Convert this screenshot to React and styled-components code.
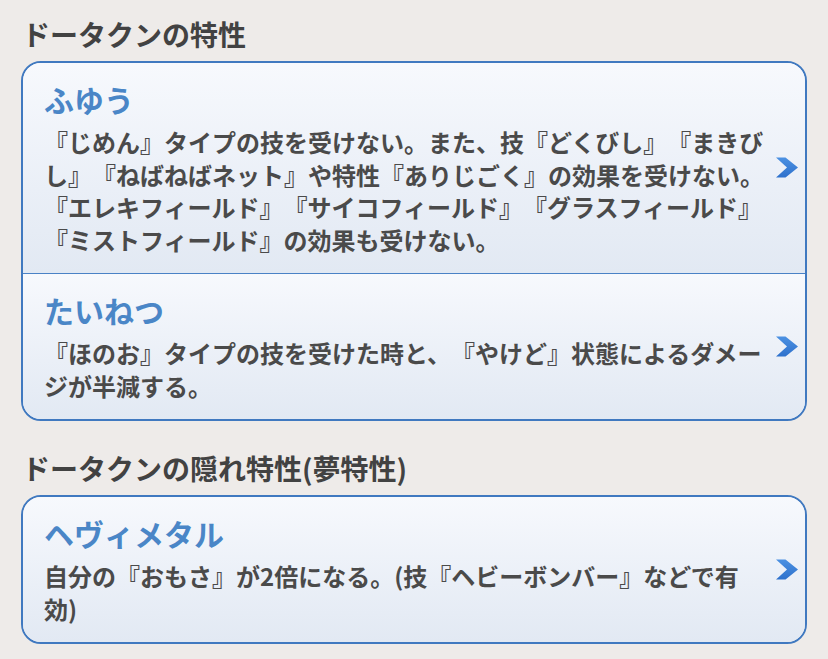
import React from 'react';
import styled, { createGlobalStyle } from 'styled-components';

const GlobalStyle = createGlobalStyle`
  html, body {
    margin: 0;
    padding: 0;
    background: #eeebe9;
  }
  body {
    font-family: "Noto Sans CJK JP", "Noto Sans", sans-serif;
    text-spacing-trim: space-all;
  }
`;

const Page = styled.div`
  padding: 16px 21px 20px;
  width: 828px;
  box-sizing: border-box;
`;

const SectionTitle = styled.h2`
  margin: ${props => (props.first ? '0' : '29px')} 0 9px 1px;
  font-size: 28px;
  line-height: 36px;
  font-weight: 700;
  color: #424242;
`;

const Card = styled.div`
  border: 2px solid #4079c0;
  border-radius: 20px;
  overflow: hidden;
  background: #eef2f9;
`;

const Row = styled.div`
  display: flex;
  align-items: center;
  gap: 10px;
  padding: 16px 7px 17px 21px;
  background: linear-gradient(to bottom, #f7f9fd 0%, #eaeff7 60%, #e2e9f3 100%);
  border-top: ${props => (props.divided ? '1px solid #4a82c6' : 'none')};
`;

const Body = styled.div`
  flex: 1;
  min-width: 0;
`;

const Name = styled.div`
  font-size: 30px;
  line-height: 40px;
  font-weight: 700;
  color: #4a86c7;
  margin-bottom: 7px;
`;

const Desc = styled.p`
  margin: 0;
  font-size: 24px;
  line-height: 32.5px;
  font-weight: 700;
  color: #4a4a4a;
  line-break: strict;
  text-spacing-trim: space-all;
`;

const Chevron = styled.svg`
  flex: none;
  width: 22px;
  height: 21px;
`;

const Arrow = () => (
  <Chevron viewBox="0 0 22 21">
    <defs>
      <linearGradient id="chev" x1="0" y1="0" x2="0" y2="1">
        <stop offset="0" stopColor="#4c91e2" />
        <stop offset="1" stopColor="#2e71cc" />
      </linearGradient>
    </defs>
    <polygon points="0,0.5 9.5,0.5 22,10.5 9.5,20.5 0,20.5 11,10.5" fill="url(#chev)" />
  </Chevron>
);

const Ability = ({ name, desc, divided }) => (
  <Row divided={divided}>
    <Body>
      <Name>{name}</Name>
      <Desc>{desc}</Desc>
    </Body>
    <Arrow />
  </Row>
);

const abilities = [
  {
    name: 'ふゆう',
    desc: '『じめん』タイプの技を受けない。また、技『どくびし』『まきびし』『ねばねばネット』や特性『ありじごく』の効果を受けない。『エレキフィールド』『サイコフィールド』『グラスフィールド』『ミストフィールド』の効果も受けない。',
  },
  {
    name: 'たいねつ',
    desc: '『ほのお』タイプの技を受けた時と、『やけど』状態によるダメージが半減する。',
  },
];

const hidden = [
  {
    name: 'ヘヴィメタル',
    desc: '自分の『おもさ』が2倍になる。(技『ヘビーボンバー』などで有効)',
  },
];

const App = () => (
  <Page>
    <GlobalStyle />
    <SectionTitle first>ドータクンの特性</SectionTitle>
    <Card>
      {abilities.map((a, i) => (
        <Ability key={a.name} name={a.name} desc={a.desc} divided={i > 0} />
      ))}
    </Card>
    <SectionTitle>ドータクンの隠れ特性(夢特性)</SectionTitle>
    <Card>
      {hidden.map(a => (
        <Ability key={a.name} name={a.name} desc={a.desc} />
      ))}
    </Card>
  </Page>
);

export default App;
